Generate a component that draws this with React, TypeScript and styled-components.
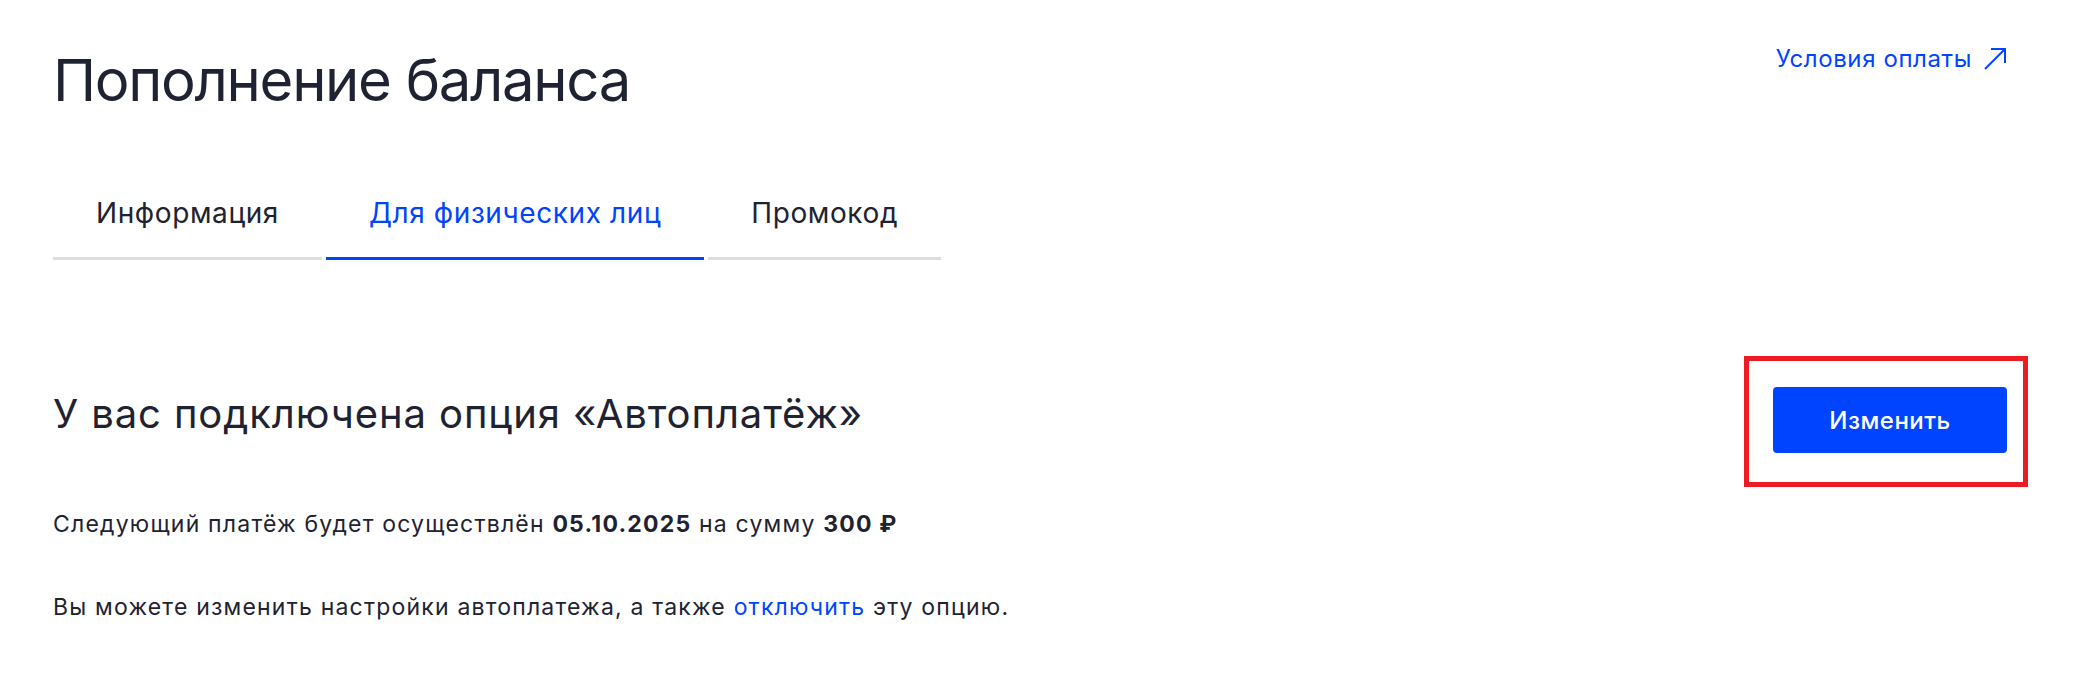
import React, { useState } from 'react';
import styled, { createGlobalStyle } from 'styled-components';

const GlobalStyle = createGlobalStyle`
  body {
    margin: 0;
    background: #ffffff;
    font-family: Inter, "Noto Sans", sans-serif;
    color: #1e2231;
  }
`;

const Page = styled.div`
  padding: 47px 81px 0 53px;
`;

const Header = styled.div`
  display: flex;
  justify-content: space-between;
  align-items: flex-start;
`;

const Title = styled.h1`
  margin: 4px 0 0;
  font-size: 58px;
  line-height: 58px;
  font-weight: 400;
  letter-spacing: -1.3px;
  color: #1e2231;
`;

const TermsLink = styled.a`
  display: flex;
  align-items: center;
  gap: 11px;
  font-size: 24px;
  line-height: 24px;
  letter-spacing: 0.6px;
  color: #0044ff;
  text-decoration: none;
  cursor: pointer;
`;

const Tabs = styled.div`
  display: flex;
  gap: 4px;
  margin-top: 68px;
`;

const Tab = styled.button<{ $active: boolean }>`
  padding: 20px 43px 28px;
  border: none;
  border-bottom: 3px solid ${({ $active }) => ($active ? '#0044ff' : '#dddddd')};
  background: transparent;
  font-family: inherit;
  font-size: 28px;
  line-height: 32px;
  letter-spacing: 0.6px;
  color: ${({ $active }) => ($active ? '#0044ff' : '#1e2231')};
  cursor: pointer;
`;

const OptionRow = styled.div`
  display: flex;
  justify-content: space-between;
  align-items: flex-start;
  margin-top: 127px;
`;

const OptionTitle = styled.h2`
  margin: 3px 0 0;
  font-size: 40px;
  line-height: 48px;
  font-weight: 400;
  letter-spacing: 0.9px;
`;

// annotation frame drawn over the button
const ButtonSlot = styled.div`
  position: relative;

  &::after {
    content: '';
    position: absolute;
    top: -31px;
    left: -29px;
    right: -21px;
    bottom: -34px;
    border: 5px solid #ed1c24;
    pointer-events: none;
  }
`;

const PrimaryButton = styled.button`
  display: block;
  width: 234px;
  height: 66px;
  border: none;
  border-radius: 4px;
  background: #0044ff;
  color: #ffffff;
  font-family: inherit;
  font-size: 24px;
  font-weight: 500;
  letter-spacing: 0.5px;
  cursor: pointer;
`;

const Text = styled.p<{ $gap: number }>`
  margin: ${({ $gap }) => $gap}px 0 0;
  font-size: 23px;
  line-height: 30px;
  letter-spacing: 1.2px;
`;

const Strong = styled.b`
  font-weight: 700;
`;

const InlineLink = styled.a`
  color: #0044ff;
  text-decoration: none;
  cursor: pointer;
`;

const tabs = [
  { id: 'info', label: 'Информация' },
  { id: 'person', label: 'Для физических лиц' },
  { id: 'promo', label: 'Промокод' },
];

const ArrowIcon = () => (
  <svg width="24" height="24" viewBox="0 0 24 24" fill="none" stroke="currentColor" strokeWidth="2">
    <path d="M2 22 22 2" />
    <path d="M8 2h14v14" />
  </svg>
);

const App: React.FC = () => {
  const [active, setActive] = useState('person');

  return (
    <Page>
      <GlobalStyle />
      <Header>
        <Title>Пополнение баланса</Title>
        <TermsLink>
          Условия оплаты
          <ArrowIcon />
        </TermsLink>
      </Header>

      <Tabs>
        {tabs.map((t) => (
          <Tab key={t.id} $active={active === t.id} onClick={() => setActive(t.id)}>
            {t.label}
          </Tab>
        ))}
      </Tabs>

      <OptionRow>
        <OptionTitle>У вас подключена опция «Автоплатёж»</OptionTitle>
        <ButtonSlot>
          <PrimaryButton>Изменить</PrimaryButton>
        </ButtonSlot>
      </OptionRow>

      <Text $gap={56}>
        Следующий платёж будет осуществлён <Strong>05.10.2025</Strong> на сумму <Strong>300 ₽</Strong>
      </Text>
      <Text $gap={53}>
        Вы можете изменить настройки автоплатежа, а также <InlineLink>отключить</InlineLink> эту опцию.
      </Text>
    </Page>
  );
};

export default App;
